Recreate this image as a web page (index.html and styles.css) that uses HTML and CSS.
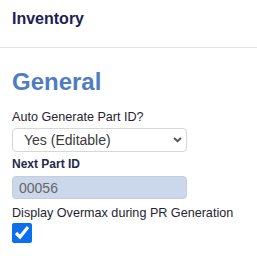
FILE: index.html
```html
<!DOCTYPE html>
<html lang="en-US">
<head>
<meta charset="utf-8">
<link rel="stylesheet" href="styles.css">
</head>
<body>

<div class="header">Inventory</div>

<div class="content">
  <h2 class="section">General</h2>

  <label class="label" for="autogen">Auto Generate Part ID?</label>
  <div class="select-wrap">
    <select class="select" id="autogen">
      <option>Yes (Editable)</option>
      <option>Yes</option>
      <option>No</option>
    </select>
    <svg class="chevron" width="9" height="6" viewBox="0 0 9 6">
      <path d="M1 1 L4.5 4.3 L8 1" fill="none" stroke="#555555" stroke-width="1.9"/>
    </svg>
  </div>

  <label class="label strong" for="nextid">Next Part ID</label>
  <input class="field" type="text" id="nextid" value="00056" disabled>

  <label class="label gap" for="overmax">Display Overmax during PR Generation</label>
  <input class="check" type="checkbox" id="overmax" checked>
</div>

</body>
</html>
```

FILE: styles.css
```css
body {
    margin: 0;
    font-family: "Liberation Sans", Arial, Helvetica, sans-serif;
    color: #1f2330;
    background-color: #ffffff;
}
.header {
    height: 38px;
    padding: 9px 12px 0 12px;
    font-size: 16px;
    line-height: 20px;
    font-weight: bold;
    color: #1d2150;
    border-bottom: 1px solid #e3e3e3;
}
.content {
    display: flex;
    flex-direction: column;
    align-items: flex-start;
    padding: 0 12px;
}
.section {
    margin: 20px 0 13px 0;
    font-size: 24px;
    line-height: 28px;
    font-weight: bold;
    color: #4f7dc0;
}
.label {
    font-size: 12.6px;
    line-height: 16px;
    color: #1f2330;
}
.strong {
    margin-top: 4px;
    font-size: 12px;
    font-weight: bold;
    color: #1f2a4a;
}
.gap {
    margin-top: 6px;
}
.select-wrap {
    position: relative;
    margin-top: 3px;
}
.select {
    display: block;
    box-sizing: border-box;
    width: 175px;
    height: 24px;
    padding: 0 0 0 11px;
    font-family: inherit;
    font-size: 14px;
    color: #3a3a3a;
    background-color: #ffffff;
    border: 1px solid #d6d6d6;
    border-radius: 4px;
    -webkit-appearance: none;
    appearance: none;
}
.chevron {
    position: absolute;
    right: 5px;
    top: 9px;
}
.field {
    box-sizing: border-box;
    margin: 4px 0 0 0;
    width: 175px;
    height: 23px;
    padding: 0 6px;
    font-family: inherit;
    font-size: 14px;
    color: #666666;
    -webkit-text-fill-color: #666666;
    background-color: #cbd7ea;
    border: 1px solid #c3cddc;
    border-radius: 4px;
}
.check {
    margin: 2px 0 0 0;
    width: 20px;
    height: 20px;
    accent-color: #0b6ff0;
}
```
